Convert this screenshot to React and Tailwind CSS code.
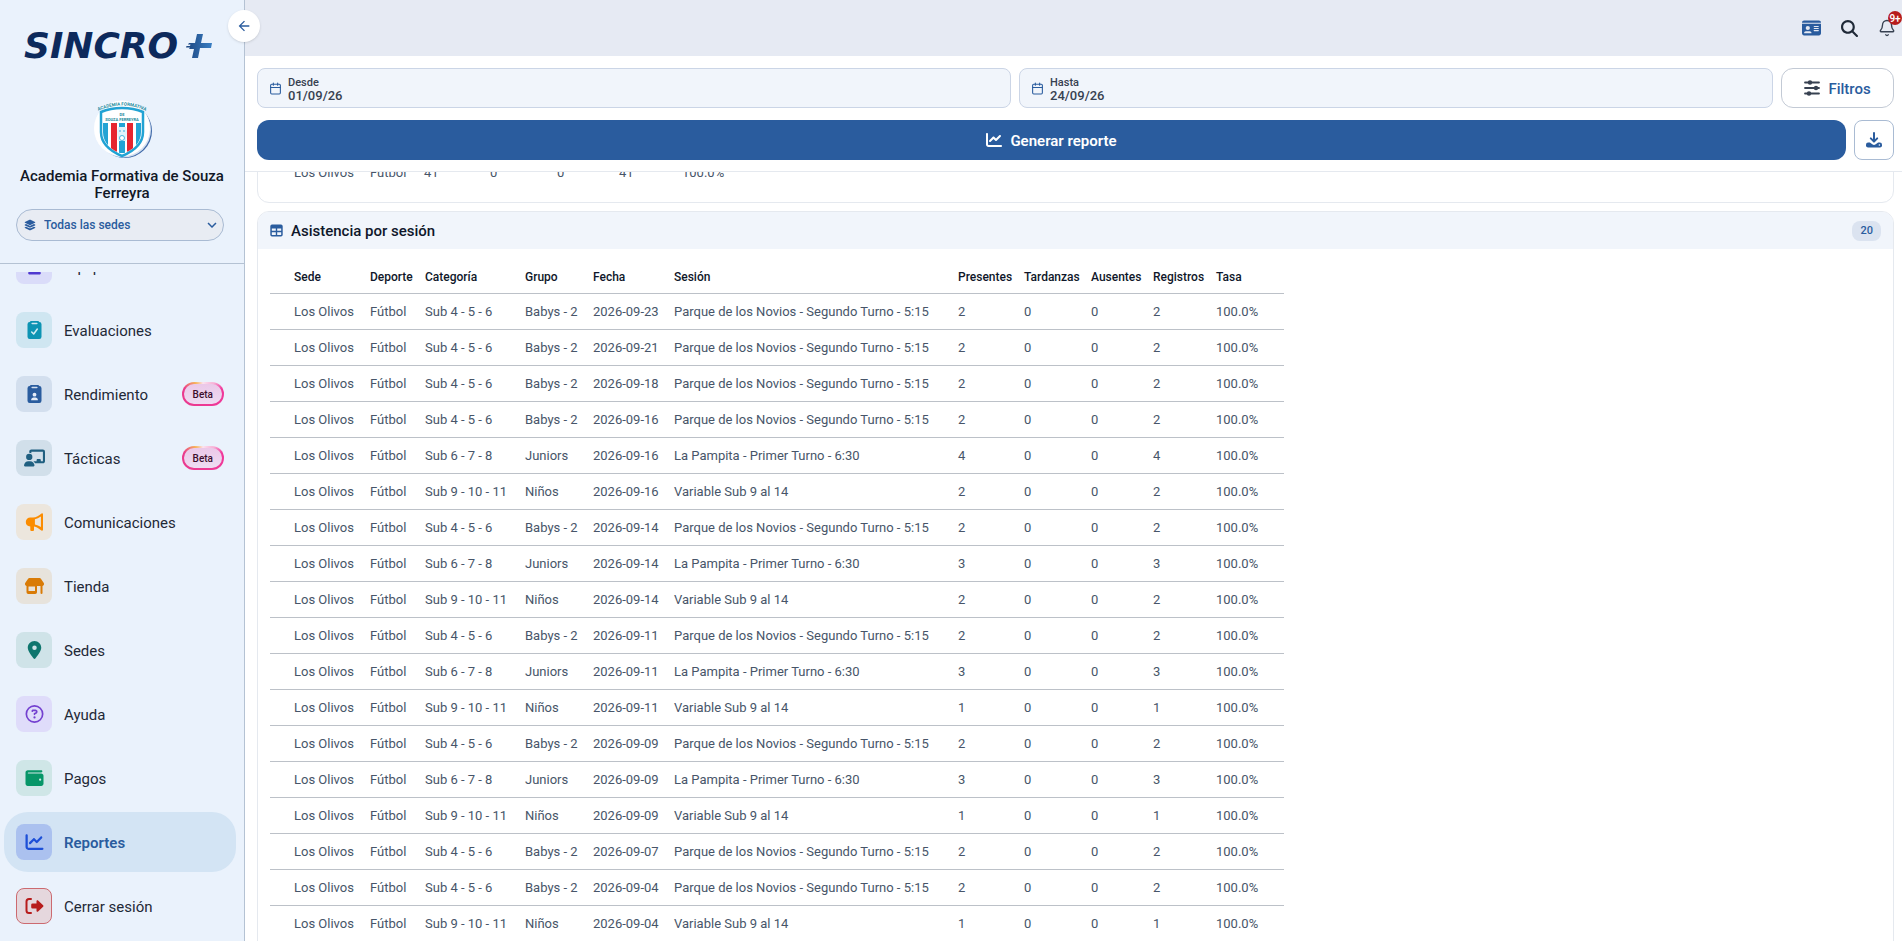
import clsx from "clsx";
import { Bell, Calendar } from "lucide-react";
import {
  FaChalkboardUser,
  FaChartLine,
  FaIdCard,
  FaLayerGroup,
  FaLocationDot,
  FaMagnifyingGlass,
  FaRegCircleQuestion,
  FaUsers,
  FaWallet,
} from "react-icons/fa6";
import { MdArrowBack, MdKeyboardArrowDown } from "react-icons/md";

function ClipboardCheck({ className }) {
  return (
    <svg viewBox="0 0 14 18" className={className} fill="none">
      <path
        fill="currentColor"
        fillRule="evenodd"
        d="M3.2 0h7.6l1 1A2.2 2.2 0 0 1 14 3.2V15.8A2.2 2.2 0 0 1 11.8 18H2.2A2.2 2.2 0 0 1 0 15.8V3.2A2.2 2.2 0 0 1 2.2 1ZM4.7 1.7a.8.8 0 0 0 0 1.6h4.6a.8.8 0 0 0 0-1.6Z"
      />
      <path d="m4.2 11 2 2L9.800 8" stroke="#d3edf4" strokeWidth="1.5" strokeLinecap="round" strokeLinejoin="round" />
    </svg>
  );
}

function ClipboardUser({ className }) {
  return (
    <svg viewBox="0 0 14 18" className={className} fill="none">
      <path
        fill="currentColor"
        fillRule="evenodd"
        d="M3.2 0h7.6l1 1A2.2 2.2 0 0 1 14 3.2V15.8A2.2 2.2 0 0 1 11.8 18H2.2A2.2 2.2 0 0 1 0 15.8V3.2A2.2 2.2 0 0 1 2.2 1ZM4.7 1.7a.8.8 0 0 0 0 1.6h4.6a.8.8 0 0 0 0-1.6Z"
      />
      <circle cx="7" cy="9.7" r="1.9" fill="#e3ebf7" />
      <path d="M3.6 15.2c0-1.700 1.2-2.7 2.5-2.7h1.8c1.3 0 2.5 1 2.5 2.7Z" fill="#e3ebf7" />
    </svg>
  );
}

function Megaphone({ className }) {
  return (
    <svg viewBox="0 0 18 18" className={className} fill="currentColor">
      <path
        fillRule="evenodd"
        d="M16 .4a1.1 1.1 0 0 1 1.5 1v15.2a1.1 1.1 0 0 1-1.600 1C13.5 15.8 11.3 13.900 8.500 13.500V17a1 1 0 0 1-1 1H5.8a1 1 0 0 1-1-1v-3.600A4.600 4.600 0 0 1 .3 9a4.600 4.600 0 0 1 4.500-4.600h2.700C10.800 4.400 13.500 2.200 16 .4ZM15.400 3.500c-2 1.400-4 2.300-6 2.700v5.300c2.100.4 4.200 1.300 6 2.600Z"
      />
    </svg>
  );
}

function Shop({ className }) {
  return (
    <svg viewBox="0 0 20 18" className={className} fill="currentColor">
      <path d="M3.6 1.7A1.600 1.600 0 0 1 5 1h10a1.600 1.600 0 0 1 1.400.7l2.900 4.400A2 2 0 0 1 17.600 9H2.400A2 2 0 0 1 .7 6.100Z" />
      <path fillRule="evenodd" d="M2 8h10.500v7.200a1.800 1.800 0 0 1-1.800 1.800H3.800A1.800 1.800 0 0 1 2 15.200Zm2 1.500V14h6.500V9.500Z" />
      <path d="M16 8h2v8a1 1 0 0 1-2 0Z" />
    </svg>
  );
}

function Logout({ className }) {
  return (
    <svg viewBox="0 0 20 18" className={className} fill="none">
      <path d="M6.500 2H4.500A2.500 2.500 0 0 0 2 4.500v9A2.500 2.500 0 0 0 4.500 16h2" stroke="currentColor" strokeWidth="2" strokeLinecap="round" />
      <path
        fill="currentColor"
        d="M12 4.200c0-.9 1-1.300 1.600-.7l5 4.700a1.100 1.100 0 0 1 0 1.600l-5 4.700c-.6.6-1.600.2-1.600-.7V11.500H8A1.300 1.300 0 0 1 6.700 10.200V7.800A1.300 1.300 0 0 1 8 6.500h4Z"
      />
    </svg>
  );
}

function TableIcon({ className }) {
  return (
    <svg viewBox="0 0 13 13" className={className} fill="currentColor">
      <path
        fillRule="evenodd"
        d="M2 .5h9a1.700 1.700 0 0 1 1.700 1.700v8.600a1.700 1.700 0 0 1-1.700 1.700H2A1.700 1.700 0 0 1 .3 10.800V2.200A1.700 1.700 0 0 1 2 .5ZM1.800 4.500v2.300h4V4.500Zm5.400 0v2.300h4V4.500ZM1.800 8.200v2.500c0 .2.200.4.4.4h3.600V8.200Zm5.400 0v2.900h3.600c.2 0 .4-.2.4-.4V8.200Z"
      />
    </svg>
  );
}

function Sliders({ className }) {
  return (
    <svg viewBox="0 0 16 16" className={className} fill="currentColor">
      <path d="M1 2.500h14M1 8h14M1 13.500h14" stroke="currentColor" strokeWidth="1.800" strokeLinecap="round" />
      <circle cx="6" cy="2.500" r="2.200" />
      <circle cx="12" cy="8" r="2.200" />
      <circle cx="5" cy="13.500" r="2.200" />
    </svg>
  );
}

function DownloadIcon({ className }) {
  return (
    <svg viewBox="0 0 16 16" className={className} fill="none">
      <path d="M8 1v8M4.8 6.4 8 9.600l3.200-3.200" stroke="currentColor" strokeWidth="2" strokeLinecap="round" strokeLinejoin="round" />
      <path
        fill="currentColor"
        fillRule="evenodd"
        d="M2.300 10.600h1.600L6.300 12.300a2.600 2.600 0 0 0 3.400 0l2.400-1.700h1.600A2.200 2.200 0 0 1 16 12.800a2.200 2.200 0 0 1-2 2.600H2a2.200 2.200 0 0 1-2-2.600 2.200 2.200 0 0 1 2.300-2.200ZM13.400 12.200a.8.8 0 1 0 0 1.600.8.8 0 0 0 0-1.600Z"
      />
    </svg>
  );
}

const menu = [
  { label: "Equipos", icon: FaUsers, box: "bg-[#dadcf9] text-[#4f39d0]" },
  { label: "Evaluaciones", icon: ClipboardCheck, box: "bg-[#cfe6f1] text-[#0d94b3]" },
  { label: "Rendimiento", icon: ClipboardUser, box: "bg-[#d3dfee] text-[#2a5c9e]", beta: true },
  { label: "Tácticas", icon: FaChalkboardUser, box: "bg-[#d1dfea] text-[#1f5f80]", beta: true },
  { label: "Comunicaciones", icon: Megaphone, box: "bg-[#ece6dd] text-[#fb8c00]" },
  { label: "Tienda", icon: Shop, box: "bg-[#e7e3dc] text-[#d97b06]" },
  { label: "Sedes", icon: FaLocationDot, box: "bg-[#cfe3e8] text-[#0f766e]" },
  { label: "Ayuda", icon: FaRegCircleQuestion, box: "bg-[#dfdcfa] text-[#7440d0]" },
  { label: "Pagos", icon: FaWallet, box: "bg-[#cfe6e7] text-[#069668]" },
  { label: "Reportes", icon: FaChartLine, box: "bg-[#abc1ef] text-[#1d4fd7]", active: true },
  { label: "Cerrar sesión", icon: Logout, box: "border border-[#cc6a70] bg-[#e5d7dd] text-[#b71c1c]" },
];

const novios = "Parque de los Novios - Segundo Turno - 5:15";
const pampita = "La Pampita - Primer Turno - 6:30";
const variable = "Variable Sub 9 al 14";

const sessions = [
  ["Sub 4 - 5 - 6", "Babys - 2", "2026-09-23", novios, 2],
  ["Sub 4 - 5 - 6", "Babys - 2", "2026-09-21", novios, 2],
  ["Sub 4 - 5 - 6", "Babys - 2", "2026-09-18", novios, 2],
  ["Sub 4 - 5 - 6", "Babys - 2", "2026-09-16", novios, 2],
  ["Sub 6 - 7 - 8", "Juniors", "2026-09-16", pampita, 4],
  ["Sub 9 - 10 - 11", "Niños", "2026-09-16", variable, 2],
  ["Sub 4 - 5 - 6", "Babys - 2", "2026-09-14", novios, 2],
  ["Sub 6 - 7 - 8", "Juniors", "2026-09-14", pampita, 3],
  ["Sub 9 - 10 - 11", "Niños", "2026-09-14", variable, 2],
  ["Sub 4 - 5 - 6", "Babys - 2", "2026-09-11", novios, 2],
  ["Sub 6 - 7 - 8", "Juniors", "2026-09-11", pampita, 3],
  ["Sub 9 - 10 - 11", "Niños", "2026-09-11", variable, 1],
  ["Sub 4 - 5 - 6", "Babys - 2", "2026-09-09", novios, 2],
  ["Sub 6 - 7 - 8", "Juniors", "2026-09-09", pampita, 3],
  ["Sub 9 - 10 - 11", "Niños", "2026-09-09", variable, 1],
  ["Sub 4 - 5 - 6", "Babys - 2", "2026-09-07", novios, 2],
  ["Sub 4 - 5 - 6", "Babys - 2", "2026-09-04", novios, 2],
  ["Sub 9 - 10 - 11", "Niños", "2026-09-04", variable, 1],
];

const columns = [
  { label: "Sede", width: "w-[100px] pl-6" },
  { label: "Deporte", width: "w-[55px]" },
  { label: "Categoría", width: "w-[100px]" },
  { label: "Grupo", width: "w-[68px]" },
  { label: "Fecha", width: "w-[81px]" },
  { label: "Sesión", width: "w-[284px]" },
  { label: "Presentes", width: "w-[66px]" },
  { label: "Tardanzas", width: "w-[67px]" },
  { label: "Ausentes", width: "w-[62px]" },
  { label: "Registros", width: "w-[63px]" },
  { label: "Tasa", width: "w-[68px]" },
];

function Logo() {
  return (
    <div className="flex h-[91px] items-center justify-between pr-8 pl-6 text-[#0d2a5c]">
      <span className="font-['DejaVu_Sans'] text-4xl leading-none font-bold italic">SINCRO</span>
      <svg viewBox="0 0 26 24" className="h-6 w-[26px]">
        <defs>
          <linearGradient id="plus" x1="0" x2="1">
            <stop offset="0" stopColor="#1d4680" />
            <stop offset="1" stopColor="#3a7fc4" />
          </linearGradient>
        </defs>
        <path fill="url(#plus)" d="M11 0h6l-2 9h11l-1 5H14l-2 10H6l2-9H3l1-1.500H0L.5 12H4l.5-1.500H2L3 9h6Z" />
      </svg>
    </div>
  );
}

function Crest() {
  return (
    <svg viewBox="0 0 60 60" className="h-15 w-15" role="img" aria-label="Escudo">
      <defs>
        <path id="arc" d="M6 12Q30 1 54 12" />
        <clipPath id="stripes">
          <path d="M11 24h38v9c0 11-8 18-19 22C19 51 11 44 11 33Z" />
        </clipPath>
      </defs>
      <circle cx="33" cy="32" r="27" fill="#3f69a8" />
      <circle cx="31.5" cy="31" r="27.5" fill="#d3e0f1" />
      <circle cx="30" cy="29.5" r="28" fill="#fff" />
      <path
        d="M30 9c7 0 14 1 21 4v20c0 12-9 19-21 24C18 52 9 45 9 33V13c7-3 14-4 21-4Z"
        fill="#fff"
        stroke="#22a3d4"
        strokeWidth="2.5"
      />
      <g clipPath="url(#stripes)">
        <path fill="#22a3d4" d="M11 24h5v30h-5zM27 24h6v30h-6zM44 24h5v30h-5z" />
        <path fill="#e6252f" d="M19 24h6v32h-6zM35 24h6v32h-6z" />
      </g>
      <path fill="#dff1fa" d="M26 28h8l1 5-1 9h-8l-1-9Z" />
      <circle cx="30" cy="39" r="2.5" fill="#fff" stroke="#22a3d4" strokeWidth=".8" />
      <circle cx="28" cy="32" r=".8" fill="#22a3d4" />
      <circle cx="32" cy="32" r=".8" fill="#22a3d4" />
      <text fill="#1b8a9c" fontSize="4.5" fontWeight="700">
        <textPath href="#arc" startOffset="50%" textAnchor="middle">
          ACADEMIA FORMATIVA
        </textPath>
      </text>
      <text x="30" y="17" fill="#1b8a9c" fontSize="4" fontWeight="700" textAnchor="middle">
        DE
      </text>
      <text x="30" y="22" fill="#1b8a9c" fontSize="4" fontWeight="700" textAnchor="middle">
        SOUZA FERREYRA
      </text>
    </svg>
  );
}

function BetaBadge() {
  return (
    <span className="ml-auto rounded-full bg-[conic-gradient(from_0deg,#fbe3f0_0deg,#f7b4d8_45deg,#f0389a_75deg,#e93a8d_285deg,#f6b55c_325deg,#fbe3f0_360deg)] p-0.5">
      <span className="flex h-5 items-center rounded-full bg-linear-to-b from-[#ebc8e8] to-[#eedcf2] px-[9px] text-[10px] font-medium text-[#3b0d2c]">
        Beta
      </span>
    </span>
  );
}

function MenuItem({ item }) {
  const Icon = item.icon;
  return (
    <a
      href="#"
      className={clsx(
        "flex h-15 shrink-0 items-center gap-3 rounded-3xl px-3",
        item.active ? "bg-[#d3e4f4] font-semibold text-[#2a5c9e]" : "text-[#1f2937]",
      )}
    >
      <span className={clsx("flex h-9 w-9 items-center justify-center rounded-lg", item.box)}>
        <Icon className="h-[18px] w-[21px]" />
      </span>
      <span className="pt-0.5 text-[15px]">{item.label}</span>
      {item.beta && <BetaBadge />}
    </a>
  );
}

function Sidebar() {
  return (
    <aside className="relative flex w-[245px] shrink-0 flex-col border-r border-[#b4c2d3] bg-[#eaf2fc]">
      <div className="flex h-[264px] shrink-0 flex-col border-b border-[#b4c2d3]">
        <Logo />
        <div className="flex flex-col items-center px-4 pt-2">
          <Crest />
          <h1 className="mt-[9px] text-center text-[15px] leading-[17px] font-medium text-[#111827]">
            Academia Formativa de Souza Ferreyra
          </h1>
        </div>
        <div className="relative mt-[7px] mr-5 ml-4 flex items-center text-[#2a5c9e]">
          <FaLayerGroup className="absolute left-2 h-3 w-3" />
          <select
            aria-label="Sede"
            className="h-8 w-full appearance-none rounded-2xl border border-[#a9bbd3] bg-[#e8ecf3] pl-[27px] text-xs font-medium"
          >
            <option>Todas las sedes</option>
          </select>
          <MdKeyboardArrowDown className="pointer-events-none absolute right-[3px] h-[18px] w-[18px]" />
        </div>
      </div>
      <div className="min-h-0 flex-1 pt-2">
        <nav className="h-full overflow-hidden pr-2 pl-1">
          <div className="-mt-9 flex flex-col gap-1">
            {menu.map((item) => (
              <MenuItem key={item.label} item={item} />
            ))}
          </div>
        </nav>
      </div>
      <button
        aria-label="Contraer menú"
        className="absolute top-[10px] -right-4 z-20 flex h-8 w-8 items-center justify-center rounded-full bg-white text-[#2a5c9e] shadow-sm"
      >
        <MdArrowBack className="h-4 w-4" />
      </button>
    </aside>
  );
}

function TopBar() {
  return (
    <header className="flex h-14 shrink-0 items-center justify-end gap-5 overflow-hidden bg-[#e6eaf3] pr-1.5">
      <button aria-label="Carnet" className="text-[#2a5c9e]">
        <FaIdCard className="h-[18px] w-[19px]" />
      </button>
      <button aria-label="Buscar" className="text-[#1f2937]">
        <FaMagnifyingGlass className="h-[17px] w-[17px]" />
      </button>
      <button aria-label="Notificaciones" className="relative text-[#374151]">
        <Bell className="h-[18px] w-[18px]" strokeWidth={1.8} />
        <span className="absolute -top-2 -right-1.5 flex h-3.5 w-3.5 items-center justify-center rounded-full bg-[#b71c1c] text-[10px] font-semibold text-white">
          9+
        </span>
      </button>
    </header>
  );
}

function DateField({ label, value }) {
  return (
    <label className="flex h-10 flex-1 items-center gap-1.5 rounded-lg border border-[#cbd5e6] bg-[#f1f5fb] px-[11px] text-[#374151]">
      <Calendar className="h-[13px] w-[13px] shrink-0 text-[#2a5c9e]" />
      <span className="flex min-w-0 flex-1 flex-col pt-0.5 font-medium">
        <span className="text-[11px] leading-3">{label}</span>
        <input className="h-[13px] w-full bg-transparent text-[13px] leading-[13px] outline-none" defaultValue={value} />
      </span>
    </label>
  );
}

function Toolbar() {
  return (
    <div className="flex shrink-0 flex-col gap-3 border-b border-[#e5e9ef] pt-3 pr-2 pb-[11px] pl-3">
      <div className="flex gap-2">
        <DateField label="Desde" value="01/09/26" />
        <DateField label="Hasta" value="24/09/26" />
        <button className="flex h-10 w-[113px] items-center justify-center gap-2 rounded-xl border border-[#c3cad5] bg-white text-[15px] font-medium text-[#2a5c9e]">
          <Sliders className="h-4 w-4 text-[#374151]" />
          <span className="pt-0.5">Filtros</span>
        </button>
      </div>
      <div className="flex gap-2">
        <button className="flex h-10 flex-1 items-center justify-center gap-2 rounded-xl bg-[#2a5c9e] text-[15px] font-semibold text-white">
          <FaChartLine className="h-4 w-4" />
          <span className="pt-0.5">Generar reporte</span>
        </button>
        <button
          aria-label="Descargar"
          className="flex h-10 w-10 items-center justify-center rounded-lg border border-[#a9bbd3] bg-white text-[#2a5c9e]"
        >
          <DownloadIcon className="h-4 w-4" />
        </button>
      </div>
    </div>
  );
}

function SummaryCard() {
  return (
    <section className="rounded-xl border border-[#e5e9ef] px-3 pb-3">
      <table className="table-fixed text-left text-[13px] text-[#475569]">
        <tbody>
          <tr className="h-9 [&>td]:pt-0.5">
            <td className="w-[100px] pl-6">Los Olivos</td>
            <td className="w-[54px]">Fútbol</td>
            <td className="w-[66px]">41</td>
            <td className="w-[67px]">0</td>
            <td className="w-[62px]">0</td>
            <td className="w-[63px]">41</td>
            <td className="w-[68px]">100.0%</td>
          </tr>
        </tbody>
      </table>
    </section>
  );
}

function SessionsCard() {
  return (
    <section className="overflow-hidden rounded-xl border border-[#e5e9ef]">
      <div className="flex h-[37px] items-center gap-2 bg-[#f1f5fb] px-3">
        <TableIcon className="h-[13px] w-[13px] text-[#2a5c9e]" />
        <h2 className="pt-0.5 text-[15px] font-medium text-[#0f172a]">Asistencia por sesión</h2>
        <span className="ml-auto rounded-lg bg-[#dbe3f0] px-2 py-0.5 text-[11px] leading-4 font-medium text-[#2a5c9e]">
          20
        </span>
      </div>
      <div className="px-3 py-3">
        <table className="w-[1014px] table-fixed text-left text-[13px] text-[#475569]">
          <thead className="text-xs text-[#0f172a]">
            <tr className="h-8 border-b border-[#bcc1c8]">
              {columns.map((col) => (
                <th key={col.label} className={clsx("font-medium", col.width)}>
                  {col.label}
                </th>
              ))}
            </tr>
          </thead>
          <tbody>
            {sessions.map(([category, group, date, session, count]) => (
              <tr key={date + category} className="h-9 border-b border-[#bcc1c8] [&>td]:pt-0.5">
                <td className="pl-6">Los Olivos</td>
                <td>Fútbol</td>
                <td>{category}</td>
                <td>{group}</td>
                <td>{date}</td>
                <td>{session}</td>
                <td>{count}</td>
                <td>0</td>
                <td>0</td>
                <td>{count}</td>
                <td>100.0%</td>
              </tr>
            ))}
          </tbody>
        </table>
      </div>
    </section>
  );
}

export default function App() {
  return (
    <div className="flex h-screen overflow-hidden bg-white font-[Roboto,sans-serif]">
      <Sidebar />
      <main className="flex min-w-0 flex-1 flex-col">
        <TopBar />
        <Toolbar />
        <div className="min-h-0 flex-1 overflow-hidden pr-2 pl-3">
          <div className="-mt-[19px] flex flex-col gap-2">
            <SummaryCard />
            <SessionsCard />
          </div>
        </div>
      </main>
    </div>
  );
}
